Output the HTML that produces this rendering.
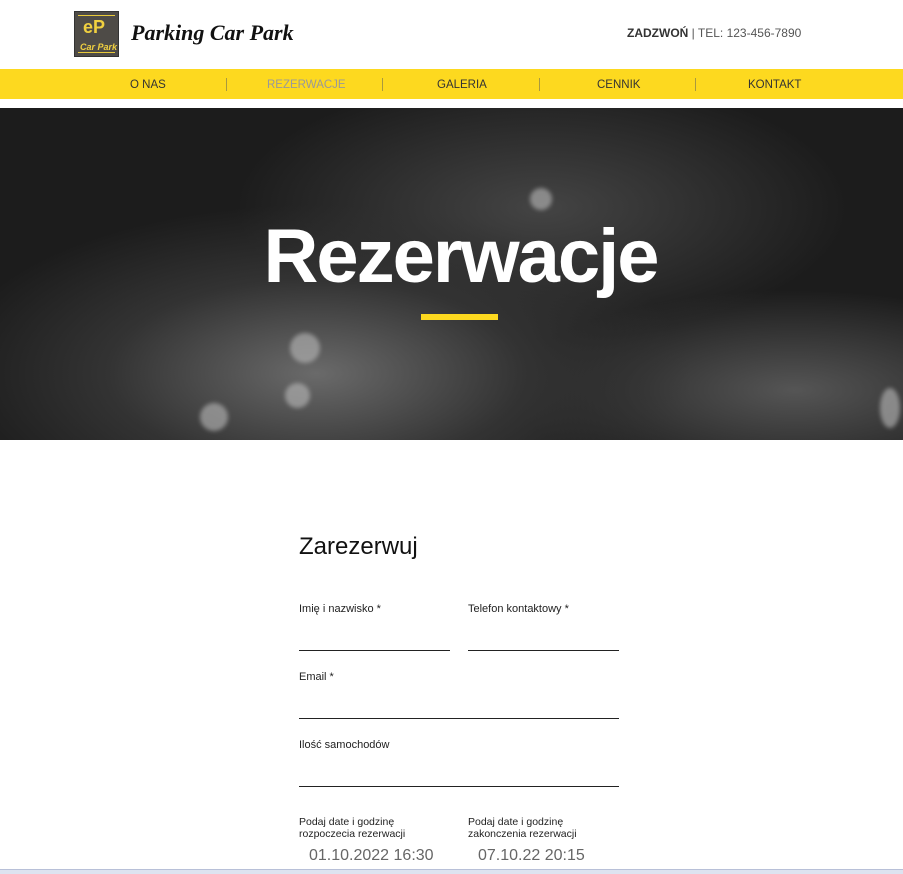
<!DOCTYPE html>
<html><head><meta charset="utf-8"><style>
*{margin:0;padding:0;box-sizing:border-box}
body{width:903px;height:874px;overflow:hidden;background:#fff;font-family:"Liberation Sans",sans-serif;position:relative}
.logo{position:absolute;left:74px;top:11px;width:45px;height:46px;background:#4e4b47;border:1px solid #333}
.logo .l1{position:absolute;left:3px;right:3px;top:3px;height:1px;background:#e8c93a}
.logo .l2{position:absolute;left:3px;right:3px;bottom:3px;height:1px;background:#e8c93a}
.logo .p{position:absolute;left:8px;top:5px;color:#f0d040;font:bold 18px "Liberation Sans";}
.logo .cp{position:absolute;left:5px;top:30px;color:#f0d040;font:italic bold 9px "Liberation Sans";}
.title{position:absolute;left:131px;top:20px;font:italic bold 22px "Liberation Serif",serif;color:#111}
.tel{position:absolute;left:627px;top:26px;font-size:12px;color:#555}
.tel b{color:#333}
.nav{position:absolute;left:0;top:69px;width:903px;height:30px;background:#fdd91f}
.nav span{position:absolute;top:10px;font-size:11.5px;color:#333}
.nav i{position:absolute;top:9px;width:1px;height:13px;background:#a9993e}
.hero{position:absolute;left:0;top:108px;width:903px;height:332px;background:radial-gradient(ellipse at 35% 80%,#6a6a6a 0,#333 25%,transparent 45%),radial-gradient(ellipse at 60% 30%,#444 0,transparent 40%),radial-gradient(ellipse at 88% 85%,#555 0,transparent 25%),#1c1c1c;overflow:hidden}
.hero h1{position:absolute;left:9px;width:100%;text-align:center;top:105px;font:bold 76px "Liberation Sans";color:#fff;letter-spacing:-2px}
.bar{position:absolute;left:421px;top:206px;width:77px;height:6px;background:#fdd91f}
.dot{position:absolute;border-radius:50%;background:#bbb;filter:blur(2px);opacity:.6}
.f{position:absolute;font-size:11px;color:#222}
.ln{position:absolute;height:1px;background:#222}
.date{position:absolute;top:847px;font-size:16px;color:#666}
</style></head><body>
<div class="logo"><div class="l1"></div><div class="l2"></div><div class="p">eP</div><div class="cp">Car Park</div></div>
<div class="title">Parking Car Park</div>
<div class="tel"><b>ZADZWOŃ</b> | TEL: 123-456-7890</div>
<div class="nav">
<span style="left:130px">O NAS</span><i style="left:226px"></i>
<span style="left:267px;color:#999">REZERWACJE</span><i style="left:382px"></i>
<span style="left:437px">GALERIA</span><i style="left:539px"></i>
<span style="left:597px">CENNIK</span><i style="left:695px"></i>
<span style="left:748px">KONTAKT</span>
</div>
<div class="hero">
<div class="dot" style="left:290px;top:225px;width:30px;height:30px"></div>
<div class="dot" style="left:285px;top:275px;width:25px;height:25px"></div>
<div class="dot" style="left:200px;top:295px;width:28px;height:28px"></div>
<div class="dot" style="left:530px;top:80px;width:22px;height:22px"></div>
<div class="dot" style="left:880px;top:280px;width:20px;height:40px"></div>
<h1>Rezerwacje</h1><div class="bar"></div></div>
<div style="position:absolute;left:299px;top:533px;font-size:24px;color:#111">Zarezerwuj</div>
<div class="f" style="left:299px;top:603px">Imię i nazwisko *</div>
<div class="f" style="left:468px;top:603px">Telefon kontaktowy *</div>
<div class="ln" style="left:299px;top:650px;width:151px"></div>
<div class="ln" style="left:468px;top:650px;width:151px"></div>
<div class="f" style="left:299px;top:671px">Email *</div>
<div class="ln" style="left:299px;top:718px;width:320px"></div>
<div class="f" style="left:299px;top:739px">Ilość samochodów</div>
<div class="ln" style="left:299px;top:786px;width:320px"></div>
<div class="f" style="left:299px;top:816px;line-height:12px;font-size:10.5px">Podaj date i godzinę<br>rozpoczecia rezerwacji</div>
<div class="f" style="left:468px;top:816px;line-height:12px;font-size:10.5px">Podaj date i godzinę<br>zakonczenia rezerwacji</div>
<div class="date" style="left:309px">01.10.2022 16:30</div>
<div class="date" style="left:478px">07.10.22 20:15</div>
<div style="position:absolute;left:0;top:869px;width:903px;height:5px;background:#dde3f0;border-top:1px solid #b8c0d8"></div>
</body></html>
